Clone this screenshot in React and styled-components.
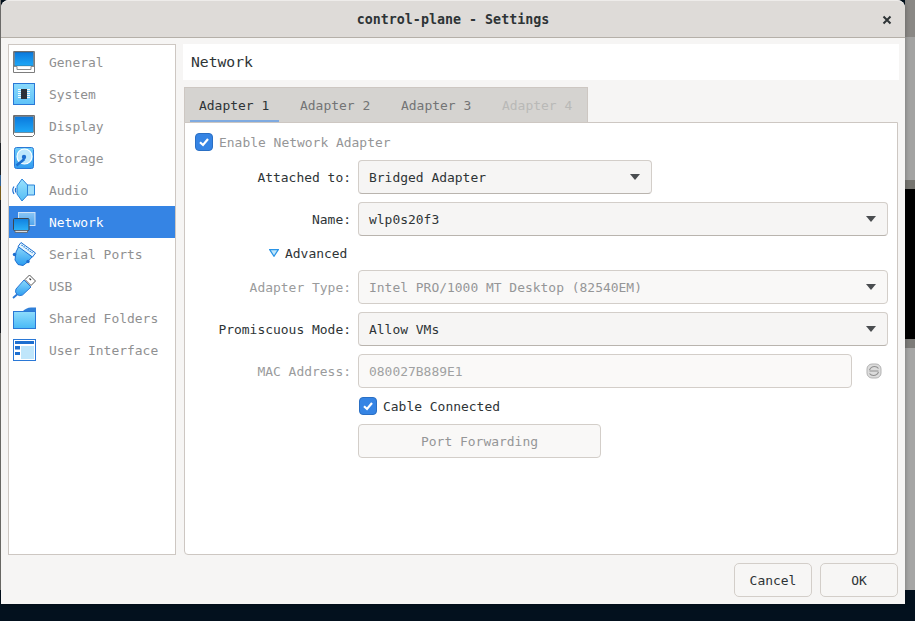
import React from "react";
import styled, { createGlobalStyle, css } from "styled-components";

const GlobalStyle = createGlobalStyle`
  html, body { margin: 0; padding: 0; width: 915px; height: 621px; overflow: hidden; background: #03111e; }
  * { box-sizing: border-box; }
`;

const mono = `"DejaVu Sans Mono", "Liberation Mono", monospace`;

const Desktop = styled.div`
  width: 915px;
  height: 621px;
  padding: 0 10px 17px 1px;
  font-family: ${mono};
  font-size: 12.96px;
  color: #2e3436;
  background-color: #03111e;
  background-repeat: no-repeat;
  background-image:
    linear-gradient(to bottom, #8a8885 0 37px, #a3a3a2 37px 180px, #75746f 180px 189px, #000 189px 339px, #7c7b78 339px 348px, #a6a6a5 348px 590px, #03111e 590px),
    linear-gradient(to bottom, #7b7a77 0 143px, #22262b 143px 175px, #3a6fa8 175px 186px, #8a6a20 186px 200px, #1d2026 200px 333px, #777672 333px 590px, #03111e 590px);
  background-size: 10px 621px, 1px 621px;
  background-position: 905px 0, 0 0;
`;

const Window = styled.div`
  width: 904px;
  height: 604px;
  display: flex;
  flex-direction: column;
  background: #f6f5f4;
  border-radius: 8px 8px 0 0;
  box-shadow: 0 0 5px rgba(0, 0, 0, 0.3);
`;

const TitleBar = styled.header`
  position: relative;
  height: 38px;
  flex: none;
  display: flex;
  align-items: center;
  justify-content: center;
  background: #dedbd8;
  border-top: 1px solid #eeecea;
  border-bottom: 1px solid #b5b0a9;
  border-radius: 8px 8px 0 0;
`;

const Title = styled.h1`
  margin: 0;
  font: bold 13.33px ${mono};
  color: #2e3436;
`;

const Close = styled.svg`
  position: absolute;
  right: 13px;
  top: 14px;
  width: 10px;
  height: 10px;
`;

const Body = styled.div`
  flex: 1;
  min-height: 0;
  display: flex;
  gap: 8px;
  padding: 6px 6px 0 7px;
`;

const Sidebar = styled.nav`
  width: 168px;
  height: 511px;
  flex: none;
  padding-top: 1px;
  background: #fff;
  border: 1px solid #cdc7c2;
`;

const SideItem = styled.div`
  height: 32px;
  display: flex;
  align-items: center;
  gap: 12px;
  padding-left: 4px;
  color: ${(p) => (p.$selected ? "#fff" : "#8f9091")};
  background: ${(p) => (p.$selected ? "#3584e4" : "transparent")};
`;

const IconSvg = styled.svg`
  width: 24px;
  height: 24px;
  flex: none;
  overflow: visible;
`;

const Main = styled.div`
  flex: 1;
  min-width: 0;
  display: flex;
  flex-direction: column;
`;

const PageHeader = styled.div`
  height: 36px;
  margin-left: -1px;
  padding: 0 0 2px 8px;
  display: flex;
  align-items: center;
  background: #fff;
  font-size: 14.7px;
  color: #2e3436;
`;

const TabBar = styled.div`
  align-self: flex-start;
  height: 36px;
  width: 404px;
  margin-top: 7px;
  padding: 0 0 0 5px;
  display: flex;
  gap: 12px;
  background: #d5d3d0;
  border: 1px solid #cdc7c2;
  border-bottom: none;
`;

const Tab = styled.div`
  width: 89px;
  padding: 10px 0 0 9px;
  color: ${(p) => (p.$active ? "#2e3436" : p.$disabled ? "#b9b9b7" : "#737475")};
  ${(p) =>
    p.$active &&
    css`
      border-bottom: 3px solid #7faae0;
    `}
`;

const Panel = styled.section`
  height: 433px;
  margin: -1px 1px 0 0;
  padding: 9px 9px 0 0;
  display: grid;
  grid-template-columns: 166px 1fr;
  column-gap: 7px;
  row-gap: 8px;
  align-content: start;
  align-items: center;
  background: #fff;
  border: 1px solid #cdc7c2;
  border-radius: 0 0 4px 4px;
`;

const FullRow = styled.div`
  grid-column: 1 / -1;
  display: flex;
  align-items: center;
  gap: 6px;
  padding-left: ${(p) => p.$indent}px;
  height: ${(p) => p.$h}px;
`;

const Label = styled.label`
  text-align: right;
  color: ${(p) => (p.$disabled ? "#9a9b9c" : "#2e3436")};
`;

const Muted = styled.span`
  color: ${(p) => (p.$disabled ? "#959697" : "#2e3436")};
`;

const fieldBase = css`
  height: 34px;
  display: flex;
  align-items: center;
  padding: 0 11px 0 10px;
  background: #f7f6f5;
  border: 1px solid #d3cec9;
  border-radius: 4px;
`;

const Select = styled.div`
  ${fieldBase}
  justify-content: space-between;
  width: ${(p) => p.$width || "100%"};
  color: ${(p) => (p.$disabled ? "#959697" : "#2e3436")};
  border-bottom-color: ${(p) => (p.$disabled ? "#d3cec9" : "#b9b4ae")};
  background: ${(p) => (p.$disabled ? "#f9f8f7" : "#f6f5f4")};
`;

const Caret = styled.svg`
  width: 10px;
  height: 6px;
  flex: none;
`;

const MacRow = styled.div`
  display: flex;
  align-items: center;
  gap: 14px;
  padding-right: 6px;
`;

const MacField = styled.div`
  ${fieldBase}
  flex: 1;
  color: #a0a1a2;
  background: #faf9f8;
`;

const Refresh = styled.svg`
  width: 16px;
  height: 16px;
  flex: none;
`;

const CheckCell = styled.div`
  grid-column: 2;
  display: flex;
  align-items: center;
  gap: 6px;
  height: 20px;
  padding-left: 1px;
`;

const Box = styled.span`
  width: 18px;
  height: 18px;
  flex: none;
  display: flex;
  align-items: center;
  justify-content: center;
  background: #3584e4;
  border: 1px solid #2a6fc4;
  border-radius: 4px;
`;

const Tick = styled.svg`
  width: 12px;
  height: 12px;
`;

const ActionButton = styled.div`
  grid-column: 2;
  ${fieldBase}
  justify-content: center;
  width: 243px;
  padding: 0;
  color: #959697;
  background: #f9f8f7;
`;

const Footer = styled.footer`
  height: 49px;
  flex: none;
  display: flex;
  justify-content: flex-end;
  gap: 8px;
  padding: 8px 7px 0 0;
`;

const Button = styled.div`
  width: 78px;
  height: 34px;
  display: flex;
  align-items: center;
  justify-content: center;
  color: #2e3436;
  background: #f7f6f5;
  border: 1px solid #d3cec9;
  border-radius: 5px;
`;

const Grad = ({ id, a = "#1fa6f5", b = "#0a78dc" }) => (
  <defs>
    <linearGradient id={id} x1="0" y1="0" x2="0" y2="1">
      <stop offset="0" stopColor={a} />
      <stop offset="1" stopColor={b} />
    </linearGradient>
  </defs>
);

const icons = {
  General: () => (
    <IconSvg viewBox="0 0 24 24">
      <Grad id="g1" a="#0a78dc" b="#1ea8f7" />
      <path d="M0.5 1.5h21v21h-21z" fill="#fff" stroke="#7d7d7d" />
      <rect x="1.5" y="2" width="19" height="14" fill="url(#g1)" stroke="#4a4a4a" strokeWidth="0.5" />
      <path d="M1 16.5h3v3h14v-3h3" fill="#fff" stroke="#8c8c8c" />
    </IconSvg>
  ),
  Display: () => (
    <IconSvg viewBox="0 0 24 24">
      <Grad id="g2" a="#0a78dc" b="#1ea8f7" />
      <path d="M0.5 1.5h21v19l-2 2h-17l-2-2z" fill="#fff" stroke="#6f6f6f" />
      <rect x="1.5" y="2.5" width="19" height="16" fill="url(#g2)" stroke="#4a4a4a" strokeWidth="0.5" />
    </IconSvg>
  ),
  System: () => (
    <IconSvg viewBox="0 0 24 24">
      <Grad id="g3" a="#8adafc" b="#5fc2f8" />
      <rect x="0.5" y="1.5" width="21" height="21" fill="url(#g3)" stroke="#2a78d6" />
      <path d="M5 7.5h12M5 9.5h12M5 11.5h12M5 13.5h12M5 15.5h12" stroke="#fff" strokeWidth="0.9" />
      <rect x="8" y="7" width="6" height="10" fill="#2b3138" />
    </IconSvg>
  ),
  Storage: () => (
    <IconSvg viewBox="0 0 24 24">
      <Grad id="g4" a="#6fcdf9" b="#2f9bf0" />
      <rect x="1.5" y="1.5" width="19" height="21" rx="2" fill="url(#g4)" stroke="#2a78d6" />
      <circle cx="11.5" cy="10.5" r="7.5" fill="#bde8fd" stroke="#fff" strokeWidth="1.2" />
      <path d="M3.5 19.5 L11.5 13" stroke="#1d6fd0" strokeWidth="2.6" />
      <circle cx="11" cy="11" r="2.2" fill="#1d6fd0" />
    </IconSvg>
  ),
  Audio: () => (
    <IconSvg viewBox="0 0 24 24">
      <Grad id="g5" a="#9be2fd" b="#54bdf5" />
      <path d="M14 7h7.5v10H14z" fill="#9fdffb" stroke="#2a84da" />
      <path d="M4 8 L9 1 L14.5 7 V17 L9 23 L4 16 Z" fill="url(#g5)" stroke="#2a84da" />
      <path d="M1 8.5 Q-1.5 12 1 16 M2.8 10 Q1.8 12 2.8 14.5" fill="none" stroke="#1d6fd0" strokeWidth="1.2" />
    </IconSvg>
  ),
  Network: () => (
    <IconSvg viewBox="0 0 24 24">
      <Grad id="g6" a="#8ac6f5" b="#4fa4ec" />
      <Grad id="g7" a="#0f7fdf" b="#2db2f8" />
      <rect x="5.5" y="2.5" width="16.5" height="13" fill="url(#g6)" stroke="#cfe2f7" />
      <rect x="0.5" y="8.5" width="15.5" height="12" rx="1" fill="url(#g7)" stroke="#3e4650" />
      <path d="M2 20.5h12.5v2h-12.5z" fill="#d9dde2" stroke="#59616b" strokeWidth="0.8" />
    </IconSvg>
  ),
  "Serial Ports": () => (
    <IconSvg viewBox="0 0 24 24">
      <Grad id="g8" a="#8ed9fb" b="#2a9cf0" />
      <path d="M6 4 L19.5 14.5 L14 20.5 L10 23.5 L5 22.5 L2 18 L3 10 Z" fill="url(#g8)" stroke="#1d6fd0" />
      <path d="M8 0.5 L22.5 11 L19.5 15 L5 4.5 Z" fill="#e8f6fe" stroke="#1d6fd0" />
      <path d="M8.5 3 L19.5 11" stroke="#2a84da" strokeWidth="1.2" strokeDasharray="1.5 1" />
      <circle cx="1.5" cy="12.5" r="1.7" fill="#1d6fd0" />
      <circle cx="15" cy="19.5" r="1.7" fill="#1d6fd0" />
    </IconSvg>
  ),
  USB: () => (
    <IconSvg viewBox="0 0 24 24">
      <Grad id="g9" a="#8adafc" b="#2f9df0" />
      <path d="M16.5 1 L22.5 7 L18 11.5 L12 5.5 Z" fill="#fff" stroke="#555" />
      <path d="M16.5 4.5l1.5 1.5" stroke="#333" strokeWidth="1.3" />
      <path d="M11 6 L18 13 L9.5 21 Q6.5 22.5 4 20.5 Q1.5 18 3 15 Z" fill="url(#g9)" stroke="#2a78d6" />
      <path d="M4 20.5 L0 24" stroke="#2a78d6" strokeWidth="1.8" />
    </IconSvg>
  ),
  "Shared Folders": () => (
    <IconSvg viewBox="0 0 24 24">
      <Grad id="g10" a="#8fdcfc" b="#48b9f6" />
      <path d="M9 6 Q13 1.5 18 1.5 H23 V8 H9 Z" fill="#2f7fd8" />
      <rect x="0.5" y="5.5" width="22" height="17" fill="url(#g10)" stroke="#2a78d6" />
    </IconSvg>
  ),
  "User Interface": () => (
    <IconSvg viewBox="0 0 24 24">
      <rect x="0.5" y="1.5" width="22" height="21" fill="#fff" stroke="#2a78d6" />
      <rect x="2" y="3" width="19" height="3" fill="#1d6fd0" />
      <rect x="2" y="8" width="5" height="3.5" fill="#1d6fd0" />
      <rect x="2" y="14" width="5" height="3" fill="#1d6fd0" />
      <rect x="8" y="8" width="13" height="13" fill="#bfe6fb" />
    </IconSvg>
  ),
};

const sideItems = ["General", "System", "Display", "Storage", "Audio", "Network", "Serial Ports", "USB", "Shared Folders", "User Interface"];

const Check = () => (
  <Box>
    <Tick viewBox="0 0 12 12">
      <path d="M2 6.2 L5 9 L10 3" fill="none" stroke="#fff" strokeWidth="2.2" />
    </Tick>
  </Box>
);

const CaretIcon = () => (
  <Caret viewBox="0 0 10 6">
    <path d="M0 0h10L5 6z" fill="#4a4d50" />
  </Caret>
);

export default function App() {
  return (
    <Desktop>
      <GlobalStyle />
      <Window>
        <TitleBar>
          <Title>control-plane - Settings</Title>
          <Close viewBox="0 0 10 10">
            <path d="M1.5 1.5 L8.5 8.5 M8.5 1.5 L1.5 8.5" stroke="#2e3436" strokeWidth="2" />
          </Close>
        </TitleBar>
        <Body>
          <Sidebar>
            {sideItems.map((name) => {
              const I = icons[name];
              return (
                <SideItem key={name} $selected={name === "Network"}>
                  <I />
                  <span>{name}</span>
                </SideItem>
              );
            })}
          </Sidebar>
          <Main>
            <PageHeader>Network</PageHeader>
            <TabBar>
              <Tab $active>Adapter 1</Tab>
              <Tab>Adapter 2</Tab>
              <Tab>Adapter 3</Tab>
              <Tab $disabled>Adapter 4</Tab>
            </TabBar>
            <Panel>
              <FullRow $indent={10} $h={20}>
                <Check />
                <Muted $disabled>Enable Network Adapter</Muted>
              </FullRow>
              <Label>Attached to:</Label>
              <Select $width="294px">
                <span>Bridged Adapter</span>
                <CaretIcon />
              </Select>
              <Label>Name:</Label>
              <Select>
                <span>wlp0s20f3</span>
                <CaretIcon />
              </Select>
              <FullRow $indent={84} $h={18}>
                <svg width="10" height="8" viewBox="0 0 10 8">
                  <path d="M0.7 0.7h8.6L5 7.3z" fill="#bfe6fb" stroke="#2a94e6" strokeWidth="1.2" />
                </svg>
                <Muted>Advanced</Muted>
              </FullRow>
              <Label $disabled>Adapter Type:</Label>
              <Select $disabled>
                <span>Intel PRO/1000 MT Desktop (82540EM)</span>
                <CaretIcon />
              </Select>
              <Label>Promiscuous Mode:</Label>
              <Select>
                <span>Allow VMs</span>
                <CaretIcon />
              </Select>
              <Label $disabled>MAC Address:</Label>
              <MacRow>
                <MacField>080027B889E1</MacField>
                <Refresh viewBox="0 0 16 16">
                  <rect x="1" y="1" width="14" height="14" rx="5" fill="#dcdcdc" stroke="#b3b3b3" />
                  <path d="M3.5 7 Q5 3.5 8.5 3.5 Q11 3.5 12.5 5.5 M12.5 9 Q11 12.5 7.5 12.5 Q5 12.5 3.5 10.5 M3.5 8h9" fill="none" stroke="#8f8f8f" strokeWidth="1.1" />
                </Refresh>
              </MacRow>
              <CheckCell>
                <Check />
                <Muted>Cable Connected</Muted>
              </CheckCell>
              <ActionButton>Port Forwarding</ActionButton>
            </Panel>
          </Main>
        </Body>
        <Footer>
          <Button>Cancel</Button>
          <Button>OK</Button>
        </Footer>
      </Window>
    </Desktop>
  );
}
